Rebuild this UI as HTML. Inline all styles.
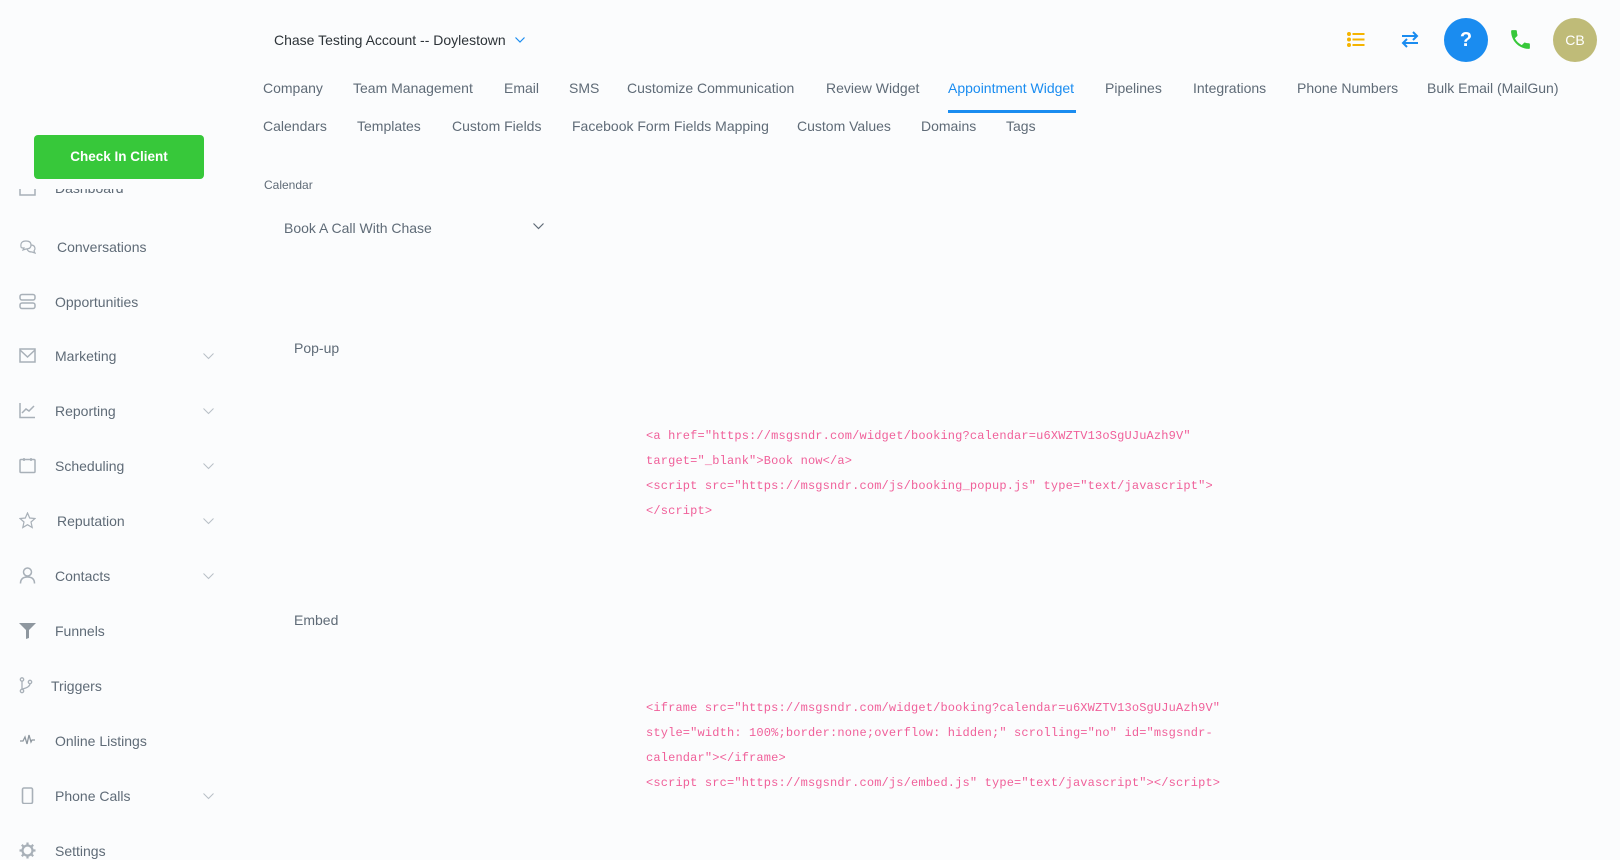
<!DOCTYPE html>
<html><head><meta charset="utf-8">
<style>
*{margin:0;padding:0;box-sizing:border-box}
body{width:1620px;height:857px;overflow:hidden;background:#fbfcfd;font-family:"Liberation Sans",Arial,sans-serif;color:#5f6b77;position:relative}
.a{position:absolute;white-space:nowrap}
.t{font-size:14px;line-height:18px;transform:translateY(-9px)}
.side{font-size:14px;line-height:18px;transform:translateY(-9px);color:#5f6b77}
.ic{position:absolute;left:19px;width:17px;height:17px;transform:translateY(-9px)}
.chev{position:absolute;left:203px;width:11px;height:7px;transform:translateY(-3px)}
.code{position:absolute;left:646px;font-family:"Liberation Mono",monospace;font-size:12px;letter-spacing:0.16px;color:#f0609a;white-space:pre;line-height:14px;transform:translateY(-7px)}
.btn{position:absolute;left:34px;top:135px;width:170px;height:44px;background:#37c83a;border-radius:4px;color:#fff;font-size:13.5px;font-weight:bold;text-align:center;line-height:44px;z-index:3}
.cover{position:absolute;left:0;top:170px;width:230px;height:19px;background:#fbfcfd;z-index:2}
</style></head><body>

<!-- sidebar -->
<div class="a side" style="left:55px;top:188px;">Dashboard</div>
<svg class="ic" style="top:188px" viewBox="0 0 17 17" fill="none" stroke="#a8b0b8" stroke-width="1.5"><rect x="1" y="1" width="15" height="15"/></svg>
<div class="cover"></div>
<div class="btn">Check In Client</div>

<div class="a side" style="left:57px;top:247px;">Conversations</div>
<svg class="ic" style="top:247px" viewBox="0 0 17 17" fill="none" stroke="#a8b0b8" stroke-width="1.2"><path d="M2 9 Q1 3 7 3 Q12 3 12 7 Q12 11 7 11 L4 12 L5 10 Q2 10 2 9Z"/><path d="M12 7 Q16 7 16 11 L15 13 L16 15 L13 14 Q9 14 8 11"/></svg>

<div class="a side" style="left:55px;top:302px;">Opportunities</div>
<svg class="ic" style="top:302px" viewBox="0 0 17 17" fill="none" stroke="#a8b0b8" stroke-width="1.5"><rect x="1" y="1.5" width="15" height="5.5" rx="2"/><rect x="1" y="10" width="15" height="5.5" rx="2"/></svg>

<div class="a side" style="left:55px;top:356px;">Marketing</div>
<svg class="ic" style="top:356px" viewBox="0 0 17 17" fill="none" stroke="#a8b0b8" stroke-width="1.5"><rect x="1" y="2" width="15" height="13"/><path d="M1 3 L8.5 10 L16 3"/></svg>

<div class="a side" style="left:55px;top:411px;">Reporting</div>
<svg class="ic" style="top:411px" viewBox="0 0 17 17" fill="none" stroke="#a8b0b8" stroke-width="1.5"><path d="M1 1 V15.5 H16"/><path d="M3 11 L7 7 L10 9 L15 4"/></svg>

<div class="a side" style="left:55px;top:466px;">Scheduling</div>
<svg class="ic" style="top:466px" viewBox="0 0 17 17" fill="none" stroke="#a8b0b8" stroke-width="1.5"><rect x="1" y="2.5" width="15" height="13" rx="1"/><path d="M5 1V4M12 1V4"/></svg>

<div class="a side" style="left:57px;top:521px;">Reputation</div>
<svg class="ic" style="top:521px" viewBox="0 0 17 17" fill="none" stroke="#a8b0b8" stroke-width="1.2"><path d="M8.5 1 L10.7 6 L16 6.5 L12 10 L13.2 15.5 L8.5 12.7 L3.8 15.5 L5 10 L1 6.5 L6.3 6Z"/></svg>

<div class="a side" style="left:55px;top:576px;">Contacts</div>
<svg class="ic" style="top:576px" viewBox="0 0 17 17" fill="none" stroke="#a8b0b8" stroke-width="1.5"><circle cx="8.5" cy="5" r="4"/><path d="M1.5 16.5 Q1.5 10 8.5 10 Q15.5 10 15.5 16.5"/></svg>

<div class="a side" style="left:55px;top:631px;">Funnels</div>
<svg class="ic" style="top:631px" viewBox="0 0 17 17" fill="#8e979f"><path d="M0 1 H17 L10 8 V16 L7 17 V8Z"/></svg>

<div class="a side" style="left:51px;top:686px;">Triggers</div>
<svg class="ic" style="top:686px" viewBox="0 0 17 17" fill="none" stroke="#a8b0b8" stroke-width="1.3"><circle cx="3" cy="2.5" r="1.7"/><circle cx="3" cy="14" r="1.7"/><circle cx="11" cy="5" r="1.7"/><path d="M3 4.2V12.3M11 6.7 Q11 10 3.5 12"/></svg>

<div class="a side" style="left:55px;top:741px;">Online Listings</div>
<svg class="ic" style="top:741px" viewBox="0 0 17 17" fill="none" stroke="#8e979f" stroke-width="1.3"><path d="M1 9 H4 L6 5 L8 12 L10 3 L12 10 L13 8 H16"/></svg>

<div class="a side" style="left:55px;top:796px;">Phone Calls</div>
<svg class="ic" style="top:796px" viewBox="0 0 17 17" fill="none" stroke="#a8b0b8" stroke-width="1.6"><rect x="3.5" y="1" width="10" height="15.5" rx="1.5"/></svg>

<div class="a side" style="left:55px;top:851px;">Settings</div>
<svg class="ic" style="top:851px" viewBox="0 0 17 17" fill="none" stroke="#a8b0b8" stroke-width="2.2"><circle cx="8.5" cy="8.5" r="5"/><path d="M8.5 0.5V3M8.5 14V16.5M0.5 8.5H3M14 8.5H16.5M2.8 2.8L4.6 4.6M12.4 12.4L14.2 14.2M2.8 14.2L4.6 12.4M12.4 4.6L14.2 2.8"/></svg>

<svg class="chev" style="top:356px" viewBox="0 0 11 7" fill="none" stroke="#b8bfc6" stroke-width="1"><path d="M0.5 0.5L5.5 5.5L10.5 0.5"/></svg>
<svg class="chev" style="top:411px" viewBox="0 0 11 7" fill="none" stroke="#b8bfc6" stroke-width="1"><path d="M0.5 0.5L5.5 5.5L10.5 0.5"/></svg>
<svg class="chev" style="top:466px" viewBox="0 0 11 7" fill="none" stroke="#b8bfc6" stroke-width="1"><path d="M0.5 0.5L5.5 5.5L10.5 0.5"/></svg>
<svg class="chev" style="top:521px" viewBox="0 0 11 7" fill="none" stroke="#b8bfc6" stroke-width="1"><path d="M0.5 0.5L5.5 5.5L10.5 0.5"/></svg>
<svg class="chev" style="top:576px" viewBox="0 0 11 7" fill="none" stroke="#b8bfc6" stroke-width="1"><path d="M0.5 0.5L5.5 5.5L10.5 0.5"/></svg>
<svg class="chev" style="top:796px" viewBox="0 0 11 7" fill="none" stroke="#b8bfc6" stroke-width="1"><path d="M0.5 0.5L5.5 5.5L10.5 0.5"/></svg>

<!-- header -->
<div class="a t" style="left:274px;top:40px;color:#2d3338;">Chase Testing Account -- Doylestown</div>
<svg class="a" style="left:515px;top:37px" width="10" height="6" viewBox="0 0 10 6" fill="none" stroke="#1a8cf0" stroke-width="1.2"><path d="M0.5 0.5L5 5L9.5 0.5"/></svg>

<svg class="a" style="left:1347px;top:32px" width="18" height="15" viewBox="0 0 18 15" fill="#f5b400"><circle cx="2" cy="2" r="2"/><circle cx="2" cy="7.5" r="2"/><circle cx="2" cy="13" r="2"/><rect x="5.5" y="1" width="12" height="2"/><rect x="5.5" y="6.5" width="12" height="2"/><rect x="5.5" y="12" width="12" height="2"/></svg>
<svg class="a" style="left:1401px;top:31px" width="18" height="17" viewBox="0 0 18 17" fill="none" stroke="#1a8cf0" stroke-width="2"><path d="M1 5H16M12 1L16 5L12 9"/><path d="M17 12H2M6 8L2 12L6 16"/></svg>
<div class="a" style="left:1444px;top:18px;width:44px;height:44px;border-radius:50%;background:#1a8cf0;color:#fff;font-weight:bold;font-size:20px;line-height:44px;text-align:center;">?</div>
<svg class="a" style="left:1508px;top:27px" width="25" height="25" viewBox="0 0 24 24" fill="#37c83a"><path d="M6.6 10.8c1.4 2.8 3.8 5.1 6.6 6.6l2.2-2.2c.3-.3.7-.4 1-.2 1.1.4 2.3.6 3.6.6.6 0 1 .4 1 1V20c0 .6-.4 1-1 1C10.6 21 3 13.4 3 4c0-.6.4-1 1-1h3.5c.6 0 1 .4 1 1 0 1.3.2 2.5.6 3.6.1.3 0 .7-.2 1z"/></svg>
<div class="a" style="left:1553px;top:18px;width:44px;height:44px;border-radius:50%;background:#bfbb78;color:#fff;font-size:14px;line-height:44px;text-align:center;">CB</div>

<!-- tabs -->
<div class="a t" style="left:263px;top:88px">Company</div>
<div class="a t" style="left:353px;top:88px">Team Management</div>
<div class="a t" style="left:504px;top:88px">Email</div>
<div class="a t" style="left:569px;top:88px">SMS</div>
<div class="a t" style="left:627px;top:88px">Customize Communication</div>
<div class="a t" style="left:826px;top:88px">Review Widget</div>
<div class="a t" style="left:948px;top:88px;color:#1a8cf0">Appointment Widget</div>
<div class="a" style="left:948px;top:110px;width:128px;height:3px;background:#1a8cf0"></div>
<div class="a t" style="left:1105px;top:88px">Pipelines</div>
<div class="a t" style="left:1193px;top:88px">Integrations</div>
<div class="a t" style="left:1297px;top:88px">Phone Numbers</div>
<div class="a t" style="left:1427px;top:88px">Bulk Email (MailGun)</div>

<div class="a t" style="left:263px;top:126px">Calendars</div>
<div class="a t" style="left:357px;top:126px">Templates</div>
<div class="a t" style="left:452px;top:126px">Custom Fields</div>
<div class="a t" style="left:572px;top:126px">Facebook Form Fields Mapping</div>
<div class="a t" style="left:797px;top:126px">Custom Values</div>
<div class="a t" style="left:921px;top:126px">Domains</div>
<div class="a t" style="left:1006px;top:126px">Tags</div>

<!-- content -->
<div class="a" style="left:264px;top:178px;font-size:12px;line-height:14px">Calendar</div>
<div class="a t" style="left:284px;top:228px">Book A Call With Chase</div>
<svg class="a" style="left:533px;top:223px" width="11" height="7" viewBox="0 0 11 7" fill="none" stroke="#5f6b77" stroke-width="1.2"><path d="M0.5 0.5L5.5 5.5L10.5 0.5"/></svg>

<div class="a t" style="left:294px;top:348px">Pop-up</div>
<div class="code" style="top:436px">&lt;a href="https://msgsndr.com/widget/booking?calendar=u6XWZTV13oSgUJuAzh9V"</div>
<div class="code" style="top:461px">target="_blank"&gt;Book now&lt;/a&gt;</div>
<div class="code" style="top:486px">&lt;script src="https://msgsndr.com/js/booking_popup.js" type="text/javascript"&gt;</div>
<div class="code" style="top:511px">&lt;/script&gt;</div>

<div class="a t" style="left:294px;top:620px">Embed</div>
<div class="code" style="top:708px">&lt;iframe src="https://msgsndr.com/widget/booking?calendar=u6XWZTV13oSgUJuAzh9V"</div>
<div class="code" style="top:733px">style="width: 100%;border:none;overflow: hidden;" scrolling="no" id="msgsndr-</div>
<div class="code" style="top:758px">calendar"&gt;&lt;/iframe&gt;</div>
<div class="code" style="top:783px">&lt;script src="https://msgsndr.com/js/embed.js" type="text/javascript"&gt;&lt;/script&gt;</div>

</body></html>
